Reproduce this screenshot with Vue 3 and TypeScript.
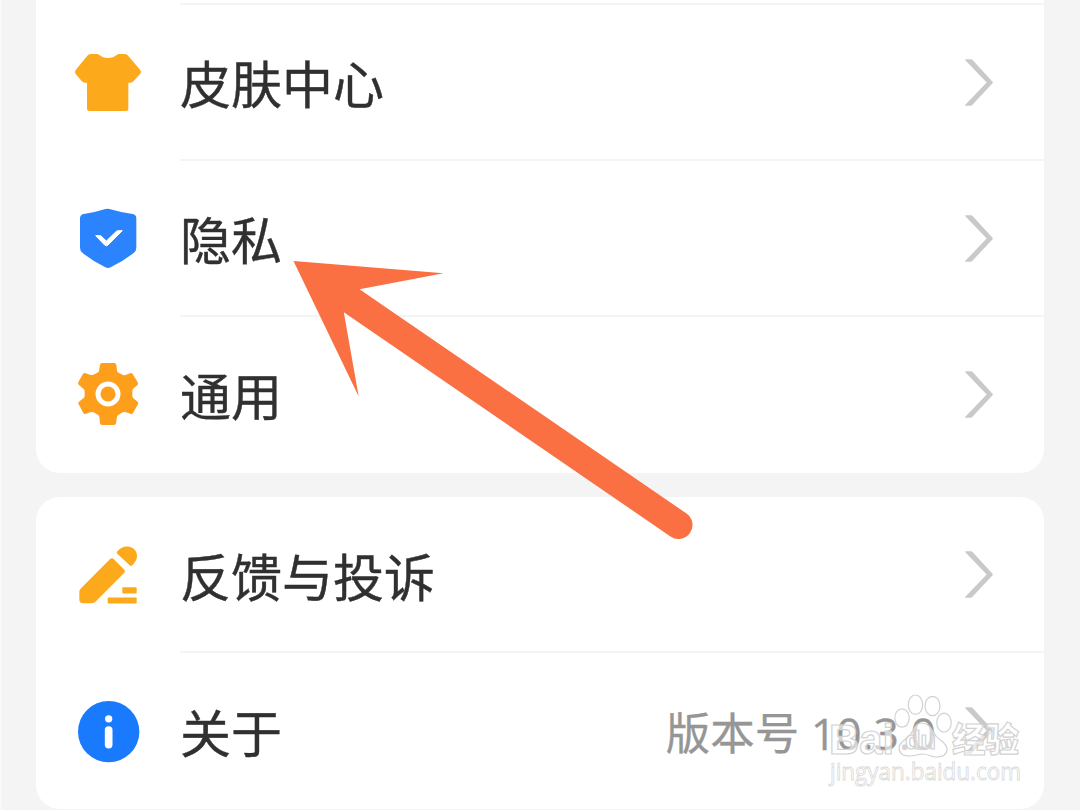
<template>
  <div class="page">
    <section v-for="(group, i) in groups" :key="i" class="card">
      <div v-for="item in group" :key="item.icon" class="row">
        <svg class="icon" :viewBox="viewBoxes[item.icon]">
          <path
            v-if="item.icon === 'skin'"
            fill="#fda91c"
            d="M92 42h19q4 0 7 3 10 9 26 9t26-9q3-3 7-3h17q5 0 9 4l37 43q5 6 1 12l-20 22q-4 5-10 5h-6v78q0 7-7 7H88q-7 0-7-7v-78h-6q-6 0-10-5l-18-21q-4-6 0-12l35-43q4-5 10-5z"
          />
          <template v-else-if="item.icon === 'privacy'">
            <path
              fill="#2b83fd"
              d="M136 42q6-2 12 0 34 10 70 15 11 2 11 13v88q0 10-8 16-32 25-69 43-8 4-16 0-37-18-68-43-8-6-8-16V70q0-11 11-13 35-5 65-15z"
            />
            <path class="tick" d="M107 122h15l17 16 29-28q3-3 7-3h12l-43 43q-5 5-10 0z" />
          </template>
          <template v-else-if="item.icon === 'general'">
            <path
              fill="#fd9f1b"
              d="M126 39h37q5 0 6 5l2 18q1 5 6 7l12 6q4 2 8 0l13-5q5-2 8 2l15 25q3 5-1 9l-13 10q-2 2-2 8v14q0 4 3 7l13 10q3 3 1 8l-15 26q-3 4-8 2l-15-5q-4-1-8 1l-12 7q-4 2-5 6l-3 20q-1 5-6 5h-36q-5 0-6-5l-2-20q-1-4-5-6l-12-7q-4-2-8-1l-15 5q-5 2-8-2l-14-26q-3-4 1-8l14-11q3-3 3-7v-13q0-4-3-7L56 104q-3-4-1-8l14-24q3-4 8-2l15 5q4 1 8-1l12-6q4-2 5-6l3-18q1-5 6-5z"
            />
            <circle class="hub" cx="144" cy="132" r="30" />
          </template>
          <g v-else-if="item.icon === 'feedback'" fill="#fda91c">
            <path d="M151 85q5-4 9 0l33 33q4 4 0 9l-86 86q-5 5-12 5H68q-10 0-10-10v-24q0-6 5-11z" />
            <path d="M172 70q-4-4 0-8 14-16 33-14 23 3 26 26 1 15-14 30-4 4-8 0z" />
            <rect x="187" y="170" width="43" height="19" rx="3" />
            <rect x="143" y="201" width="87" height="18" rx="3" />
          </g>
          <template v-else>
            <circle fill="#1a7afe" cx="146" cy="138.5" r="92" />
            <circle fill="#fff" cx="146" cy="100" r="11" />
            <rect fill="#fff" x="134.5" y="122" width="23" height="67" rx="11" />
          </template>
        </svg>
        <div class="content">
          <span class="label">{{ item.label }}</span>
          <span v-if="item.note" class="note">{{ item.note }}</span>
          <svg class="chevron" viewBox="0 0 84 140">
            <path d="M2 0h15q3 0 5 2l60 65q3 3 0 6l-61 65q-2 2-5 2H2q-3-1-1-3l64-67L1 3q-1-3 1-3z" />
          </svg>
        </div>
      </div>
    </section>

    <svg class="arrow" viewBox="0 0 1080 810">
      <path d="M293.5 261L443.5 273.3 359.5 289.3 686.5 513.5A14 14 0 0 1 670.5 536.5L343.8 312.3 358.7 396.5z" />
    </svg>

    <svg class="watermark" viewBox="820 690 220 110">
      <g class="paw">
        <ellipse cx="902" cy="718" rx="7.2" ry="9.2" />
        <ellipse cx="915.5" cy="704.7" rx="7.2" ry="9.7" />
        <ellipse cx="932.5" cy="706" rx="7.5" ry="9.7" />
        <ellipse cx="944" cy="722.7" rx="7.2" ry="9.5" />
        <path d="M922 723c8 0 10 8 14 13s11 7 11 13-5 8-11 8c-5 0-8-3-13-3s-8 2-13 2c-6 0-11-2-11-8s7-8 11-13 5-12 12-12z" />
      </g>
      <text class="brand" x="829" y="754" font-size="43" textLength="65" lengthAdjust="spacingAndGlyphs">Bai</text>
      <text class="brand du" x="905" y="749" font-size="25" textLength="31" lengthAdjust="spacingAndGlyphs">du</text>
      <text class="brand zh" x="952" y="752" font-size="34" textLength="67" lengthAdjust="spacingAndGlyphs">经验</text>
      <text class="site" x="830" y="780" font-size="24" textLength="191" lengthAdjust="spacingAndGlyphs">jingyan.baidu.com</text>
    </svg>
  </div>
</template>

<script setup lang="ts">
type IconName = 'skin' | 'privacy' | 'general' | 'feedback' | 'about'

interface SettingItem {
  icon: IconName
  label: string
  note?: string
}

const groups: SettingItem[][] = [
  [
    { icon: 'skin', label: '皮肤中心' },
    { icon: 'privacy', label: '隐私' },
    { icon: 'general', label: '通用' },
  ],
  [
    { icon: 'feedback', label: '反馈与投诉' },
    { icon: 'about', label: '关于', note: '版本号 10.3.0' },
  ],
]

const viewBoxes: Record<IconName, string> = {
  skin: '36 18 216 216',
  privacy: '36 21 216 216',
  general: '36 24 216 216',
  feedback: '36 25.5 216 216',
  about: '36 28.5 216 216',
}
</script>

<style>
body {
  margin: 0;
  overflow: hidden;
  background: #f4f4f4;
}
</style>

<style scoped>
.page {
  position: relative;
  box-sizing: border-box;
  width: 1080px;
  height: 810px;
  padding: 0 36px 0 34px;
  overflow: hidden;
  display: flex;
  flex-direction: column;
  gap: 24px;
  background: #f4f4f4;
  border-left: 2px solid #f8f8f8;
  font-family: "Noto Sans CJK SC", sans-serif;
}

.card {
  flex: none;
  background: #fff;
  border-radius: 24px;
}

.card:first-child {
  padding: 4px 0 0.5px;
  border-radius: 0 0 24px 24px;
}

.row {
  box-sizing: border-box;
  height: 156px;
  padding-left: 36px;
  display: flex;
  align-items: center;
  gap: 36px;
}

.icon {
  flex: none;
  width: 72px;
  height: 72px;
}

.tick {
  fill: #fff;
  stroke: #fff;
  stroke-width: 3;
  stroke-linejoin: round;
}

.hub {
  fill: none;
  stroke: #fff;
  stroke-width: 15;
}

.content {
  position: relative;
  flex: 1;
  height: 100%;
  padding-right: 51.5px;
  display: flex;
  align-items: center;
}

.row:not(:first-child) .content::before,
.card:first-child .content::before {
  content: "";
  position: absolute;
  top: -1px;
  left: 0;
  right: 0;
  height: 2px;
  background: #f4f4f4;
}

.card:last-of-type .content::before {
  top: -1.5px;
}

.label {
  flex: 1;
  font-size: 51px;
  line-height: 72px;
  color: #303030;
  -webkit-text-stroke: 0.4px #303030;
}

.note {
  margin-right: 28.5px;
  padding-top: 4px;
  font-family: "Open Sans", "Noto Sans CJK SC", sans-serif;
  font-size: 44.5px;
  line-height: 64px;
  color: #969696;
  -webkit-text-stroke: 0.3px #969696;
}

.chevron {
  width: 28px;
  height: 47px;
  fill: #c9c9c9;
}

.arrow {
  position: absolute;
  inset: 0 auto auto -2px;
  width: 1080px;
  height: 810px;
  fill: #fa7042;
}

.watermark {
  position: absolute;
  top: 690px;
  left: 818px;
  width: 220px;
  height: 110px;
  overflow: visible;
  fill: rgba(255, 255, 255, 0.6);
  stroke: #d2d2d2;
  stroke-width: 1.2;
}

.brand {
  font-family: "Liberation Sans", sans-serif;
  font-weight: 700;
}

.brand.du {
  fill: rgba(255, 255, 255, 0.3);
}

.brand.zh {
  font-family: "Noto Sans CJK SC", sans-serif;
  font-weight: 900;
}

.site {
  font-family: "Open Sans", sans-serif;
  font-weight: 500;
  stroke: #d8d8d8;
  stroke-width: 0.8;
}
</style>
